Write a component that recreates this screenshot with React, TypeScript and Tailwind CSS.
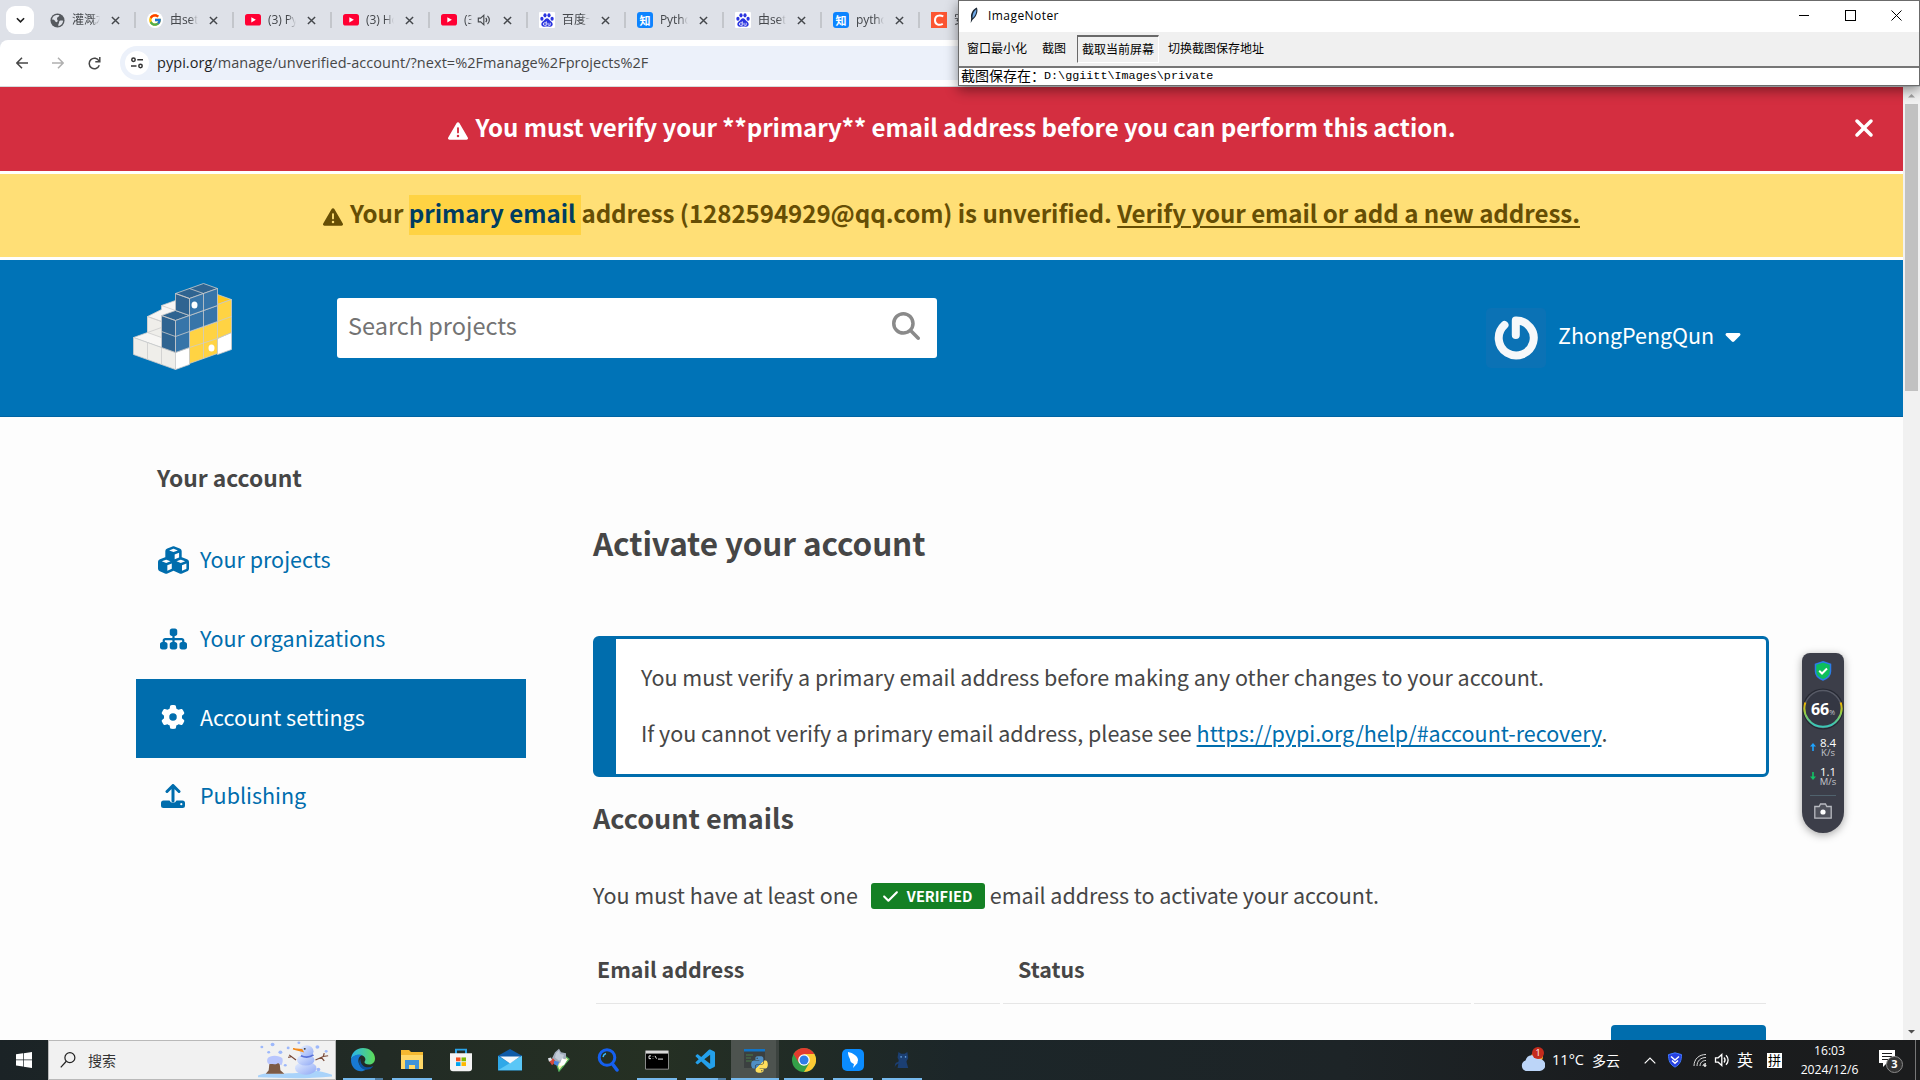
import type { ReactNode } from "react";
import {
  FaCubes,
  FaSitemap,
  FaGear,
  FaTriangleExclamation,
  FaMagnifyingGlass,
  FaXmark,
  FaCaretDown,
  FaCheck,
  FaPython,
} from "react-icons/fa6";
import { FcGoogle } from "react-icons/fc";
import { VscVscode } from "react-icons/vsc";

const site = "font-['Noto_Sans_CJK_SC',sans-serif]";
const ui = "font-['Open_Sans','Noto_Sans_CJK_SC',sans-serif]";

function Globe() {
  return (
    <svg viewBox="0 0 16 16" className="size-[15px]">
      <circle cx="8" cy="8" r="7.500" fill="#55595e" />
      <path d="M3 4.500C5 2 8 2 10 2.500c0 2-2 1.500-2.500 3S9 7.500 8 9s-2 .5-3-1-3-1-3-1zM10 8.500c1.500-.5 3.500-.5 4 0-.5 3-2.500 5-5 5.500 0-1.500-.5-2 .5-3z" fill="#dee1e8" />
    </svg>
  );
}
function Baidu() {
  return (
    <svg viewBox="0 0 16 16" className="size-4">
      <rect width="16" height="16" rx="1" fill="#fff" />
      <g fill="#2a34e0">
        <ellipse cx="2.900" cy="6.800" rx="1.600" ry="2" />
        <ellipse cx="6" cy="3.300" rx="1.600" ry="2.100" />
        <ellipse cx="10" cy="3.300" rx="1.600" ry="2.100" />
        <ellipse cx="13.100" cy="6.800" rx="1.600" ry="2" />
        <path d="M8 6.200c1.500 0 2 1.300 3 2.300s2.700 2 2.700 3.800c0 1.700-1.500 2.700-3 2.400-1.700-.3-3.700-.3-5.400 0-1.500.3-3-.7-3-2.400 0-1.800 1.700-2.800 2.700-3.800s1.500-2.300 3-2.300z" />
      </g>
      <path d="M7.300 9.300v4H5.600a1.200 1.200 0 010-2.500h1.700M9 10.800v1.700c0 .5.300.8.800.8h1.400v-2.500" stroke="#fff" strokeWidth=".8" fill="none" />
    </svg>
  );
}
function Zhihu() {
  return (
    <span className="flex size-4 items-center justify-center rounded-[3px] bg-[#0d84ff] font-['Noto_Sans_CJK_SC',sans-serif] text-[11px] leading-4 font-bold text-white">
      知
    </span>
  );
}
function CsdnMark() {
  return (
    <svg viewBox="0 0 16 16" className="size-4">
      <rect width="16" height="16" fill="#fc5531" />
      <path d="M12.300 4.300C8 2.300 4 4 4 8.200s3.600 5.800 7.800 3.700" stroke="#fff" strokeWidth="2" fill="none" />
    </svg>
  );
}
function Tube() {
  return (
    <svg viewBox="0 0 16 12" className="h-3 w-4">
      <rect width="16" height="11.500" rx="2.600" fill="#ff0033" />
      <path d="M6.300 3.200v5.200l4.600-2.600z" fill="#fff" />
    </svg>
  );
}
function Cross({ className }: { className: string }) {
  return (
    <svg viewBox="0 0 10 10" className={className}>
      <path d="M1 1l8 8M9 1l-8 8" stroke="currentColor" strokeWidth="1.600" />
    </svg>
  );
}
function Speaker({ className }: { className: string }) {
  return (
    <svg viewBox="0 0 16 16" className={className} fill="none" stroke="currentColor" strokeWidth="1.300">
      <path d="M1.500 5.800h2.700L7.800 2.500v11L4.200 10.200H1.500z" />
      <path d="M10 5.500c1.300 1.500 1.300 3.500 0 5M12 3.200c2.800 2.800 2.800 6.800 0 9.600" />
    </svg>
  );
}

const tabs: { icon: ReactNode; title: string; audio?: boolean }[] = [
  { icon: <Globe />, title: "灌溉水" },
  {
    icon: (
      <span className="flex size-4 items-center justify-center rounded-full bg-white">
        <FcGoogle className="size-[14px]" />
      </span>
    ),
    title: "由setup",
  },
  { icon: <Tube />, title: "(3) Py" },
  { icon: <Tube />, title: "(3) Ho" },
  { icon: <Tube />, title: "(3)", audio: true },
  { icon: <Baidu />, title: "百度一" },
  { icon: <Zhihu />, title: "Pytho" },
  { icon: <Baidu />, title: "由setup" },
  { icon: <Zhihu />, title: "pytho" },
  { icon: <CsdnMark />, title: "安装" },
];

function BrowserBar() {
  return (
    <div className={`${ui} flex h-[87px] w-[1920px] flex-col bg-[#dee1e8]`}>
      <div className="flex h-10 items-center overflow-hidden">
        <div className="ml-[6px] flex size-7 shrink-0 items-center justify-center rounded-[9px] bg-white">
          <svg viewBox="0 0 10 6" className="h-[6px] w-[9px]">
            <path d="M1 1l4 4 4-4" stroke="#1f1f1f" strokeWidth="1.800" fill="none" />
          </svg>
        </div>
        <div className="w-[4px] shrink-0" />
        {tabs.map((t, i) => (
          <div key={i} className="flex h-4 w-[98px] shrink-0 items-center border-r-2 border-[#c3c6cb] pl-[11px] text-[#44474b]">
            <span className="flex w-4 shrink-0 items-center justify-center">{t.icon}</span>
            <span
              className={`${t.audio ? "w-[8px]" : "w-[28px]"} ml-[7px] shrink-0 overflow-hidden mask-r-from-70% text-[12px] leading-[18px] tracking-[-0.1px] whitespace-nowrap`}
            >
              {t.title}
            </span>
            {t.audio && <Speaker className="ml-[5px] size-[14px] shrink-0" />}
            <Cross className={`${t.audio ? "ml-[12px]" : "ml-[11px]"} size-[9px] shrink-0`} />
          </div>
        ))}
      </div>
      <div className="flex h-[46px] items-center rounded-tl-[8px] bg-white pl-[16px]">
        <svg viewBox="0 0 12 12" className="size-3 text-[#474747]">
          <path d="M12 6H1M6 .8L.9 6 6 11.200" stroke="currentColor" strokeWidth="1.500" fill="none" />
        </svg>
        <svg viewBox="0 0 12 12" className="ml-6 size-3 text-[#b0b0b0]">
          <path d="M0 6h11M6 .8L11.100 6 6 11.200" stroke="currentColor" strokeWidth="1.500" fill="none" />
        </svg>
        <svg viewBox="0 0 13 13" className="ml-6 size-[13px] text-[#474747]">
          <path d="M11.300 8.300A5.200 5.200 0 1111 4M11.800 0v4.700H7.300" stroke="currentColor" strokeWidth="1.500" fill="none" />
        </svg>
        <div className="ml-[19px] flex h-[34px] flex-1 items-center rounded-l-full bg-[#ecf1fa] pl-[5px]">
          <div className="flex size-6 items-center justify-center rounded-full bg-white">
            <svg viewBox="0 0 14 14" className="size-[14px]" stroke="#333" strokeWidth="1.500" fill="none">
              <circle cx="3.500" cy="3.800" r="1.700" />
              <path d="M7.300 3.800H13M1 10h5.500" />
              <circle cx="10.500" cy="10" r="1.700" />
            </svg>
          </div>
          <span className="ml-[8px] text-[14.500px] tracking-[0.045px] whitespace-nowrap text-[#474747]">
            <span className="text-[#1f1f1f]">pypi.org</span>/manage/unverified-account/?next=%2Fmanage%2Fprojects%2F
          </span>
        </div>
      </div>
      <div className="h-px bg-[#d5dbdd]" />
    </div>
  );
}

function ImageNoter() {
  return (
    <div className={`${ui} absolute top-0 left-[958px] z-10 flex h-[86px] w-[962px] flex-col border border-[#6b6b6b] bg-[#f0f0f0] text-[12px] text-black shadow-[0_4px_12px_rgba(0,0,0,0.45)]`}>
      <div className="flex h-[31px] items-center bg-white pb-[2px] pl-[9px]">
        <svg viewBox="0 0 12 18" className="h-[17px] w-3">
          <path d="M9 .5c1.500 3 .5 9-4.500 13L2.500 17 3 12C2 7 5 2 9 .5z" fill="#1c2733" />
          <path d="M8.500 2.500c.3 3-1 7-4 9.500C4 8 6 4 8.500 2.500z" fill="#6fa8e6" />
        </svg>
        <span className="ml-[8px] text-[12px] tracking-[0.440px]">ImageNoter</span>
        <div className="ml-auto flex items-center">
          <div className="h-px w-[10px] bg-black" />
          <div className="ml-[36px] size-[11px] border border-black" />
          <svg viewBox="0 0 11 11" className="mr-[17px] ml-[35px] size-[11px]">
            <path d="M.5.5l10 10M10.500.5l-10 10" stroke="#000" />
          </svg>
        </div>
      </div>
      <div className="flex h-[34px] items-center pl-[8px] text-[12px] leading-[16px]">
        <span>窗口最小化</span>
        <span className="ml-[15px]">截图</span>
        <span className="ml-[11px] flex h-[28px] w-[82px] items-center justify-center border border-t-2 border-t-[#696969] border-r-white border-b-white border-l-[#696969]">
          截取当前屏幕
        </span>
        <span className="ml-[9px]">切换截图保存地址</span>
      </div>
      <div className="flex h-[19px] items-center border-t-2 border-[#767676] bg-white pb-[2px] pl-[2px] text-[14px] leading-[16px] whitespace-pre">
        截图保存在：
        <span className="-ml-px font-['Liberation_Mono',monospace] text-[11.750px]">D:\ggiitt\Images\private</span>
      </div>
    </div>
  );
}

function Banners() {
  return (
    <>
      <div className="relative flex h-[84px] items-center justify-center bg-[#d42e40] text-[24.100px] font-semibold tracking-[-0.05px] text-white">
        <FaTriangleExclamation className="mt-[3px] mr-[8px] size-5" />
        <span className="pb-[3px] whitespace-nowrap">You must verify your **primary** email address before you can perform this action.</span>
        <FaXmark className="absolute top-[27px] right-[25px] size-7" />
      </div>
      <div className="h-[3px] bg-white" />
      <div className="flex h-[83px] items-center justify-center bg-[#ffdf76] text-[24.100px] font-semibold tracking-[-0.05px] whitespace-pre text-[#664e04]">
        <FaTriangleExclamation className="mt-[2px] mr-[7px] size-5" />
        <span className="pb-[4px]">Your </span>
        <span className="mb-[2px] flex h-10 items-center bg-[#ffd343] pr-[6px] pb-[2px] text-[#003d61]">primary email</span>
        <span className="pb-[4px]">address (1282594929@qq.com) is unverified. </span>
        <span className="pb-[4px] underline decoration-2 underline-offset-[3px]">Verify your email or add a new address.</span>
      </div>
      <div className="h-[3px] bg-white" />
    </>
  );
}

function Logo() {
  return (
    <svg viewBox="-.5 -.5 99 87" className="h-[87px] w-[99px]" strokeLinejoin="round">
      <g stroke="#ccc" strokeWidth=".8">
        <path d="M0 54l14-5V33l14-7v-4l14-5v52l-42-15z" fill="#f7f6f4" />
        <path d="M14 33v16l14 5V38zM0 54l42 15v17L0 71z" fill="#efeeea" />
        <path d="M14 59v17M28 64v17M14 33l14 5M28 22l14 5M14 49l14-5" fill="none" />
        <path d="M42 69l14-5v17l-14 5zM84 55l14-6v17l-14 5z" fill="#fff" />
        <path d="M84 11l14 5-14 5z" fill="#ffc91d" />
        <path d="M84 21l14-5v33l-14 6v15l-28 10V48l28-10z" fill="#ffd343" />
        <path d="M84 38l14-5M56 64l28-9M70 43v32M84 38v17" fill="none" />
        <path d="M28 32l14-5 14 5-14 5zM28 32l14 5v32l-14-5z" fill="#2f6491" />
        <path d="M42 37l42-15v16L56 48v16l-14 5z" fill="#3775a9" />
        <path d="M42 10L70 0l14 5-28 10zM42 10l14 5v17l-14-5z" fill="#2f6491" />
        <path d="M56 15l28-10v17L56 32z" fill="#3775a9" />
        <path d="M56 5l14 5v33M28 48l14 5 14-5V32" fill="none" />
      </g>
      <ellipse cx="61" cy="21.500" rx="3" ry="3.500" fill="#fff" />
      <ellipse cx="78" cy="64.500" rx="3" ry="3.500" fill="#fff" />
    </svg>
  );
}

function Header() {
  return (
    <div className="flex h-[157px] items-start border-b border-[#0064a3] bg-[#0073b7]">
      <div className="mt-[23px] ml-[133px]"><Logo /></div>
      <div className="mt-[38px] ml-[105px] flex h-[60px] w-[600px] items-center justify-between rounded-[3px] bg-white pr-[17px] pl-[11px]">
        <span className="pb-[4px] text-[23.500px] text-[#737373]">Search projects</span>
        <FaMagnifyingGlass className="mb-[4px] size-[28px] text-[#8a8a8a]" />
      </div>
      <div className="mt-[48px] ml-[549px] flex h-[60px] items-center">
        <div className="flex size-[60px] items-center justify-center rounded-[5px] bg-[#0b72b5]">
          <svg viewBox="0 0 60 60" className="size-[60px]" fill="none" stroke="#f6f8fa" strokeWidth="8" strokeLinecap="round">
            <path d="M18.500 17A17.500 17.500 0 1029.800 12.500V27" strokeLinejoin="round" />
          </svg>
        </div>
        <span className="ml-[12px] pb-[6px] text-[21.500px] tracking-[-0.05px] text-white">ZhongPengQun</span>
        <FaCaretDown className="mb-[5px] ml-[7px] size-6 text-white" />
      </div>
    </div>
  );
}

function UploadIcon() {
  return (
    <svg viewBox="0 0 24 24" className="size-6" fill="none">
      <path d="M12 17V2.500M6 7.500l6-6 6 6" stroke="currentColor" strokeWidth="3" strokeLinecap="round" strokeLinejoin="round" />
      <path d="M2.500 16.500H8.500a3.800 3.800 0 007 0h6a2.500 2.500 0 012.500 2.500v2.500a2.500 2.500 0 01-2.500 2.500h-19A2.500 2.500 0 010 21.500V19a2.500 2.500 0 012.500-2.500z" fill="currentColor" />
      <circle cx="20.300" cy="20.200" r="1.100" fill="#fdfdfd" />
    </svg>
  );
}

const nav = [
  { label: "Your projects", icon: <FaCubes className="h-[28px] w-[31px]" /> },
  { label: "Your organizations", icon: <FaSitemap className="h-[24px] w-[27px]" /> },
  { label: "Account settings", icon: <FaGear className="mb-[2px] size-6" />, active: true },
  { label: "Publishing", icon: <UploadIcon /> },
];

function Sidebar() {
  return (
    <div className="ml-[136px] w-[390px] shrink-0">
      <div className="mt-[43px] h-[36px] pl-[21px] text-[22.800px] leading-[36px] font-semibold text-[#464646]">Your account</div>
      <div className="mt-[26px]">
        {nav.map((n) => (
          <div key={n.label} className={`flex h-[78.700px] items-center pl-[21px] text-[21.500px] ${n.active ? "bg-[#006dad] text-white" : "text-[#006dad]"}`}>
            <span className="mr-[11px] mb-[2px] flex w-8 justify-center">{n.icon}</span>
            <span className="pb-[4px]">{n.label}</span>
          </div>
        ))}
      </div>
    </div>
  );
}

function Main() {
  return (
    <div className="ml-[67px] w-[1176px] shrink-0 text-[21.500px] text-[#464646]">
      <div className="mt-[100px] h-[50px] text-[31.500px] leading-[50px] font-semibold tracking-[-0.1px]">Activate your account</div>
      <div className="mt-[69px] flex h-[141px] flex-col rounded-[6px] border-[3px] border-l-[23px] border-[#006dad] bg-white pl-[25px]">
        <div className="mt-[20px] h-[36px] leading-[36px]">You must verify a primary email address before making any other changes to your account.</div>
        <div className="mt-[20px] h-[36px] leading-[36px]">
          If you cannot verify a primary email address, please see{" "}
          <span className="text-[#006dad] underline decoration-2 underline-offset-[3px]">https://pypi.org/help/#account-recovery</span>.
        </div>
      </div>
      <div className="mt-[22px] h-[38px] text-[27px] leading-[38px] font-semibold">Account emails</div>
      <div className="mt-[41px] flex h-[36px] items-center whitespace-pre">
        <span className="pb-[2px]">You must have at least one</span>
        <span className="ml-[13px] flex h-[26px] w-[114px] items-center rounded-[3px] bg-[#148024] pl-[11px] text-[14.600px] leading-[20px] font-bold text-white">
          <FaCheck className="mr-[8px] size-[17px]" />
          <span>VERIFIED</span>
        </span>
        <span className="ml-[5px] pb-[2px] tracking-[-0.04px]">email address to activate your account.</span>
      </div>
      <div className="mt-[35px] ml-[3px] flex h-[55px] gap-[3px] text-[21.400px] font-bold">
        <div className="w-[404px] border-b border-[#e6e6e6] pl-px leading-[40px]">Email address</div>
        <div className="w-[468px] border-b border-[#e6e6e6] pl-[15px] leading-[40px]">Status</div>
        <div className="w-[292px] border-b border-[#e6e6e6]" />
      </div>
      <div className="mt-[21px] mr-[3px] ml-auto h-[60px] w-[155px] rounded-[4px] bg-[#006dad]" />
    </div>
  );
}

function Scrollbar() {
  return (
    <div className="flex w-[17px] shrink-0 flex-col items-center bg-[#f1f1f1]">
      <svg viewBox="0 0 17 17" className="size-[17px]"><path d="M5 10.500L8.500 7l3.500 3.500z" fill="#a3a3a3" /></svg>
      <div className="h-[287px] w-[13px] bg-[#c1c1c1]" />
      <svg viewBox="0 0 17 17" className="mt-auto size-[17px]"><path d="M5 7l3.500 3.500L12 7z" fill="#505050" /></svg>
    </div>
  );
}

function Rate({ value, unit, children }: { value: string; unit: string; children: ReactNode }) {
  return (
    <div className="mt-[9px] flex items-center gap-[4px]">
      <svg viewBox="0 0 6 8" className="h-2 w-[6px]">{children}</svg>
      <div className="text-center">
        <div className="text-[11.500px] leading-[11px] text-white">{value}</div>
        <div className="text-[9.500px] leading-[9px] text-[#c4c6cc]">{unit}</div>
      </div>
    </div>
  );
}

function Widget() {
  return (
    <div className={`${ui} absolute top-[653px] left-[1802px] flex h-[180px] w-[42px] flex-col items-center rounded-t-[8px] rounded-b-[21px] bg-[#3c3e49] shadow-[0_2px_8px_rgba(0,0,0,0.35)]`}>
      <svg viewBox="0 0 18 20" className="mt-[8px] h-[20px] w-[18px]">
        <path d="M9 .8l7.500 2.400v7C16.500 14.500 13 17.500 9 19c-4-1.500-7.500-4.500-7.500-8.800v-7z" fill="#0dbf5c" stroke="#2b7de9" strokeWidth="1.500" />
        <path d="M5.200 9.800L8 12.500l5-5" stroke="#fff" strokeWidth="2" fill="none" />
      </svg>
      <div className="relative mt-[7px] flex size-[42px] items-center justify-center">
        <svg viewBox="0 0 42 42" className="absolute inset-0 size-[42px]">
          <defs>
            <linearGradient id="ring" x1="0" x2="0" y1="0" y2="1">
              <stop offset="0" stopColor="#f5b400" />
              <stop offset=".4" stopColor="#9ccc3c" />
              <stop offset=".9" stopColor="#3cc7b5" />
            </linearGradient>
          </defs>
          <circle cx="21" cy="21" r="20.500" fill="#262933" />
          <circle cx="21" cy="21" r="18.500" fill="#343743" stroke="#575a66" strokeWidth="1.500" />
          <path d="M3.300 14.500a18.600 18.600 0 1035.400 0" fill="none" stroke="url(#ring)" strokeWidth="2" />
        </svg>
        <span className="relative text-[16px] leading-none font-bold text-white">66</span>
        <span className="relative mt-[6px] text-[7px] leading-none text-[#c4c6cc]">%</span>
      </div>
      <div className="-mt-[2px] flex flex-col items-center">
        <Rate value="8.4" unit="K/s"><path d="M3 0l3 3.500H3.800V8H2.200V3.500H0z" fill="#1ea4ff" /></Rate>
        <Rate value="1.1" unit="M/s"><path d="M3 8l3-3.500H3.800V0H2.200v4.500H0z" fill="#12c466" /></Rate>
      </div>
      <div className="mt-[9px] h-px w-[26px] bg-[#50626d]" />
      <svg viewBox="0 0 18 16" className="mt-[7px] h-4 w-[18px]">
        <path d="M.8 3.500h4.400L6.500 1h5l1.300 2.500h4.400v11.700H.8z" fill="#50525c" stroke="#b9bbc1" strokeWidth="1.300" />
        <circle cx="9" cy="9" r="2.600" fill="#fff" />
      </svg>
    </div>
  );
}

function Slot({ children, line, active, split }: { children: ReactNode; line?: boolean; active?: boolean; split?: boolean }) {
  return (
    <div className={`relative flex h-10 w-12 shrink-0 items-center justify-center ${active ? "bg-[#4d534f]" : ""}`}>
      {children}
      {split && <div className={`absolute bottom-0 ${active ? "right-0 h-10 w-[3px] bg-[#3c433f]" : ""}`} />}
      {line && <div className={`absolute bottom-0 h-[2px] bg-[#76b9ed] ${active ? "inset-x-0" : "inset-x-1"}`} />}
      {split && !active && <div className="absolute right-1 bottom-0 h-[2px] w-2 bg-[#4c7ba0]" />}
    </div>
  );
}

function Snow() {
  return (
    <svg viewBox="0 0 78 44" className="h-[38px] w-[76px]" preserveAspectRatio="none">
      <defs>
        <linearGradient id="snow" x1="0" y1="0" x2="1" y2="1"><stop stopColor="#e6efff" /><stop offset="1" stopColor="#8fa8f5" /></linearGradient>
      </defs>
      <path d="M1 42v-2c6-3 14-3 20-2 10-1 22 0 30-3 10-2 18 1 26 4v2c-25 3-50 2-76 1z" fill="#a9d3fa" />
      <path d="M13 23h10l1 11 4 4H9l3-4z" fill="#7d5a45" />
      <path d="M11 20c2-4 12-4 15 0 1 3 0 6-1 8-2 0-2-3-4-2-3 2-6 0-8 1-3-1-3-5-2-7z" fill="#b9c6fd" />
      <path d="M40 22l-7-6M36 18l-4 1M60 22l8-4 5-1M68 18l1-4M66 19l3 4" stroke="#7b4b3a" strokeWidth="1.300" fill="none" />
      <ellipse cx="50" cy="31.500" rx="11" ry="7.500" fill="url(#snow)" />
      <ellipse cx="50" cy="22" rx="9" ry="6.500" fill="url(#snow)" />
      <circle cx="51" cy="12" r="7" fill="url(#snow)" />
      <path d="M47 12l-10-3 9 1z" fill="#f28a1c" stroke="#f28a1c" strokeWidth="1.500" />
      <path d="M45 17c4 2 9 2 13-1" stroke="#5a73da" strokeWidth="2" fill="none" />
      <circle cx="49" cy="9" r="1" fill="#333" />
      <g fill="#9db8fb">
        <circle cx="5" cy="7" r="1.500" /><circle cx="16" cy="4" r="2" /><circle cx="12" cy="13" r="1.500" /><circle cx="24" cy="13" r="2" /><circle cx="32" cy="8" r="1.500" />
        <circle cx="43" cy="2" r="1.500" /><circle cx="62" cy="7" r="2" /><circle cx="71" cy="12" r="1.500" /><circle cx="29" cy="28" r="1.500" /><circle cx="63" cy="33" r="2" />
      </g>
    </svg>
  );
}

function Taskbar() {
  return (
    <div className={`${ui} absolute top-[1040px] left-0 flex h-10 w-[1920px] items-center bg-[linear-gradient(90deg,#1b2326_0%,#222b25_20%,#253023_34%,#1c2629_50%,#1d2427_70%,#1a1c1e_85%,#1b1c1d_100%)] text-white`}>
      <div className="flex w-12 items-center justify-center">
        <svg viewBox="0 0 16 18" className="h-[16px] w-4" preserveAspectRatio="none" fill="#fff">
          <path d="M0 2.500L7 1.500v7H0zM7.700 1.400L16 0v8.500H7.700zM0 9.300h7v7l-7-1zM7.700 9.300H16V18l-8.300-1.500z" />
        </svg>
      </div>
      <div className="flex h-10 w-[288px] items-center border border-[#b9b9b9] bg-[#f1f1f1] pl-[11px] text-[#333]">
        <svg viewBox="0 0 17 17" className="size-4" fill="none" stroke="#222" strokeWidth="1.300">
          <circle cx="10.500" cy="6" r="5.300" /><path d="M6.700 9.800L.8 16.300" />
        </svg>
        <span className="ml-[12px] text-[14px]">搜索</span>
        <div className="mr-[2px] ml-auto self-end"><Snow /></div>
      </div>
      <div className="ml-[3px] flex gap-px">
        <Slot line split>
          <svg viewBox="0 0 24 24" className="size-6">
            <defs>
              <linearGradient id="e1" x1="0" y1="0" x2="1" y2="0"><stop stopColor="#28b4f0" /><stop offset="1" stopColor="#5ddc55" /></linearGradient>
            </defs>
            <path d="M0 12C0 5 5 0 12 0s12 5 12 10.500c0 4-3 6-6 6s-4.500-1.200-4.500-2.200.9-1.300.9-3C14.400 9 12 7 8.500 7 4 7 0 10 0 12z" fill="url(#e1)" />
            <path d="M0 12c0-3 4-5.500 8.500-5.500 1 0 2 .3 2.500.6C8 8.500 7 11 7.500 14c.7 4 4 7 7.500 7.500C9 26 0 21.500 0 12z" fill="#1879d2" />
            <path d="M9.500 10.500c-3.500 5 .5 13.300 9 10.800 1.700-.7 3-2 3.700-3.300-7 3.500-13.500-.5-12.700-7.500z" fill="#0c52a0" />
          </svg>
        </Slot>
        <Slot line>
          <svg viewBox="0 0 24 22" className="h-[22px] w-6">
            <path d="M1 1h8l2 2h12v17H1z" fill="#f5b931" /><path d="M1 6h22v14H1z" fill="#ffd868" />
            <path d="M5 20v-9h14v9h-4v-4H9v4z" fill="#3f93d9" />
          </svg>
        </Slot>
        <Slot>
          <svg viewBox="0 0 24 28" className="h-6 w-6" preserveAspectRatio="none">
            <path d="M7 7V2h10v5" stroke="#2ba4ea" strokeWidth="2" fill="none" />
            <path d="M1 6h22v18a3 3 0 01-3 3H4a3 3 0 01-3-3z" fill="#f4f4f4" />
            <path d="M7 11h4.500v4.500H7z" fill="#f25022" /><path d="M12.500 11H17v4.500h-4.500z" fill="#7fba00" /><path d="M7 16.500h4.500V21H7z" fill="#00a4ef" /><path d="M12.500 16.500H17V21h-4.500z" fill="#ffb900" />
          </svg>
        </Slot>
        <Slot>
          <svg viewBox="0 0 24 26" className="h-[22px] w-6" preserveAspectRatio="none">
            <path d="M0 8L12 0l12 8v17H0z" fill="#0f5ba8" /><path d="M0 8l12 9L24 8v17H0z" fill="#2fa8e8" /><path d="M24 8v17H0z" fill="#5ac7f7" />
            <path d="M2 9l10 8 10-8z" fill="#f4f8fc" />
          </svg>
        </Slot>
        <Slot>
          <svg viewBox="0 0 24 28" className="h-6 w-6" preserveAspectRatio="none">
            <path d="M15 7l7 6-10 14-2-7z" fill="#eef3a8" stroke="#4fae5b" strokeWidth="1.300" />
            <path d="M8 5l4-4 2 4 5 1v6l-4 6-6-1-4-5z" fill="#a3adbd" />
            <path d="M9 6l3-3 1 4 4 1-1 4-4 3-4-4z" fill="#c3ccd8" />
            <path d="M15 12l5 2-3 6-5 1z" fill="#fff" />
            <path d="M2 15l4-3 3 4-4 4z" fill="#d6493a" /><path d="M7 15l5 1-1 5-4-2z" fill="#4a83dd" /><path d="M1 12l3-1 1 3-3 2z" fill="#dfe3ea" />
          </svg>
        </Slot>
        <Slot>
          <svg viewBox="0 0 24 24" className="size-6" fill="none" stroke="#1560f0">
            <circle cx="11" cy="9.500" r="7.800" strokeWidth="3" /><path d="M16.500 16l4.500 6" strokeWidth="3.500" strokeLinecap="round" /><path d="M7 9a4.500 4.500 0 013-3.500" stroke="#39b7ff" strokeWidth="1.500" />
          </svg>
        </Slot>
        <Slot line>
          <svg viewBox="0 0 24 24" className="h-[22px] w-6" preserveAspectRatio="none">
            <path d="M.5 2h23v20H.5z" fill="#000" stroke="#8f8f8f" /><path d="M1 2h22v3H1z" fill="#d8d8d8" /><path d="M6 7.500H4v3h2M8 8v.5M8 10v.5M10 7.500l1.500 3M13 11h5" stroke="#eee" fill="none" />
          </svg>
        </Slot>
        <Slot line split><VscVscode className="size-6 text-[#24a0ea]" /></Slot>
        <Slot line active split>
          <div className="relative size-6">
            <svg viewBox="0 0 24 24" className="size-6">
              <path d="M1 1h21v19H1z" fill="#3b4040" /><path d="M1 1h21v2.500H1z" fill="#1174c7" /><path d="M3 7h7M3 10h5M3 13h6" stroke="#4a7a48" />
              <defs><linearGradient id="py" x1="0" y1="0" x2="1" y2="1"><stop offset=".5" stopColor="#4f8fc4" /><stop offset=".5" stopColor="#ffdf5c" /></linearGradient></defs>
            </svg>
            <FaPython className="absolute top-[7px] left-[7px] size-[19px]" fill="url(#py)" />
          </div>
        </Slot>
        <Slot line>
          <svg viewBox="0 0 24 24" className="size-6">
            <circle cx="12" cy="12" r="12" fill="#34a048" /><path d="M12 12L1.600 6A12 12 0 0122.400 6z" fill="#e33b2e" /><path d="M12 6h10.400A12 12 0 0112 24l5.200-9z" fill="#fcc934" /><path d="M1.600 6L7 15l5-9z" fill="#e33b2e" />
            <circle cx="12" cy="12" r="5.800" fill="#fff" /><circle cx="12" cy="12" r="4.500" fill="#2f7de8" />
          </svg>
        </Slot>
        <Slot line>
          <svg viewBox="0 0 22 22" className="size-[22px]">
            <rect width="22" height="22" rx="5" fill="#0b8cff" /><path d="M6 3c5 1 10 4 10 8 0 1-.5 2-1 2.500h1L11 19l1-4c-3-1-4-3-4-5 0 0-2-3-2-7z" fill="#fff" />
          </svg>
        </Slot>
        <Slot line>
          <svg viewBox="0 0 18 20" className="h-[18px] w-4">
            <path d="M5 1l3 2h4l3-2 1 7c-1 2-2 3-2 4l2 7H4l1-5c-2 1-4 2-4 5 0-4 0-6 4-7 1-3-1-3-1-5z" fill="#1b3f73" /><circle cx="8" cy="6.500" r=".9" fill="#6aa6e2" /><circle cx="13" cy="6.500" r=".9" fill="#6aa6e2" />
          </svg>
        </Slot>
      </div>
      <div className="mr-[4px] ml-auto flex h-10 items-center">
        <div className="relative">
          <svg viewBox="0 0 25 25" className="size-[25px]">
            <circle cx="17" cy="9" r="6" fill="#f39b23" /><path d="M6 23a5.500 5.500 0 01-.5-10.500A7 7 0 0118.500 11 6 6 0 0120 23z" fill="#bcd5f8" />
          </svg>
          <span className="absolute -top-px left-[12px] flex size-[12px] items-center justify-center rounded-full bg-[#c42b1c] text-[9px] leading-none">1</span>
        </div>
        <span className="ml-[7px] text-[14.500px]">11°C</span>
        <span className="ml-[8px] text-[14px]">多云</span>
        <svg viewBox="0 0 12 7" className="ml-[24px] h-[7px] w-3"><path d="M.7 6.300L6 1l5.300 5.300" stroke="#fff" strokeWidth="1.200" fill="none" /></svg>
        <svg viewBox="0 0 16 16" className="ml-[11px] size-4"><path d="M8 .8l6.500 1.800c0 6-1.500 10-6.500 12.500C3 12.600 1.500 8.600 1.500 2.600z" fill="#2740e0" stroke="#3e78ff" /><path d="M4 4.500L8 8l4-3.500M5 8.500l3 2.700 3-2.700" stroke="#fff" strokeWidth="1.500" fill="none" /></svg>
        <svg viewBox="0 0 14 14" className="ml-[10px] size-[14px]" fill="none" stroke="#ddd">
          <path d="M1 13C1 6 6 1.500 13 1.500M4 13c0-5 3.500-8.500 9-8.500M7 13c0-3 2-5.500 6-5.500M10 13c0-1.500 1-2.500 3-2.500" /><circle cx="12" cy="12.500" r="1" fill="#fff" />
        </svg>
        <Speaker className="ml-[7px] size-4" />
        <span className="ml-[7px] text-[16px]">英</span>
        <span className="ml-[14px] flex size-[15px] items-center justify-center bg-white text-[13px] leading-none text-black">拼</span>
        <div className="ml-[9px] w-[77px] text-center text-[12.200px] leading-[19px]">
          <div>16:03</div>
          <div>2024/12/6</div>
        </div>
        <div className="relative ml-[10px] size-[26px]">
          <svg viewBox="0 0 26 26" className="size-[26px]">
            <path d="M1 3h16v13H9l-4 4v-4H1z" fill="#fff" /><path d="M4 6.500h10M4 9.500h10M4 12.500h6" stroke="#1b1c1d" />
          </svg>
          <span className="absolute top-[9px] left-[8px] flex size-[17px] items-center justify-center rounded-full border border-[#8a8a8a] bg-[#333] text-[11px] font-bold">3</span>
        </div>
        <div className="ml-[11px] h-10 w-px bg-[#777]" />
      </div>
    </div>
  );
}

export default function App() {
  return (
    <div className={`${site} relative h-[1080px] w-[1920px] overflow-hidden bg-[#fdfdfd]`}>
      <BrowserBar />
      <div className="flex h-[953px] overflow-hidden">
        <div className="w-[1903px] shrink-0">
          <Banners />
          <Header />
          <div className="flex">
            <Sidebar />
            <Main />
          </div>
        </div>
        <Scrollbar />
      </div>
      <ImageNoter />
      <Widget />
      <Taskbar />
    </div>
  );
}
